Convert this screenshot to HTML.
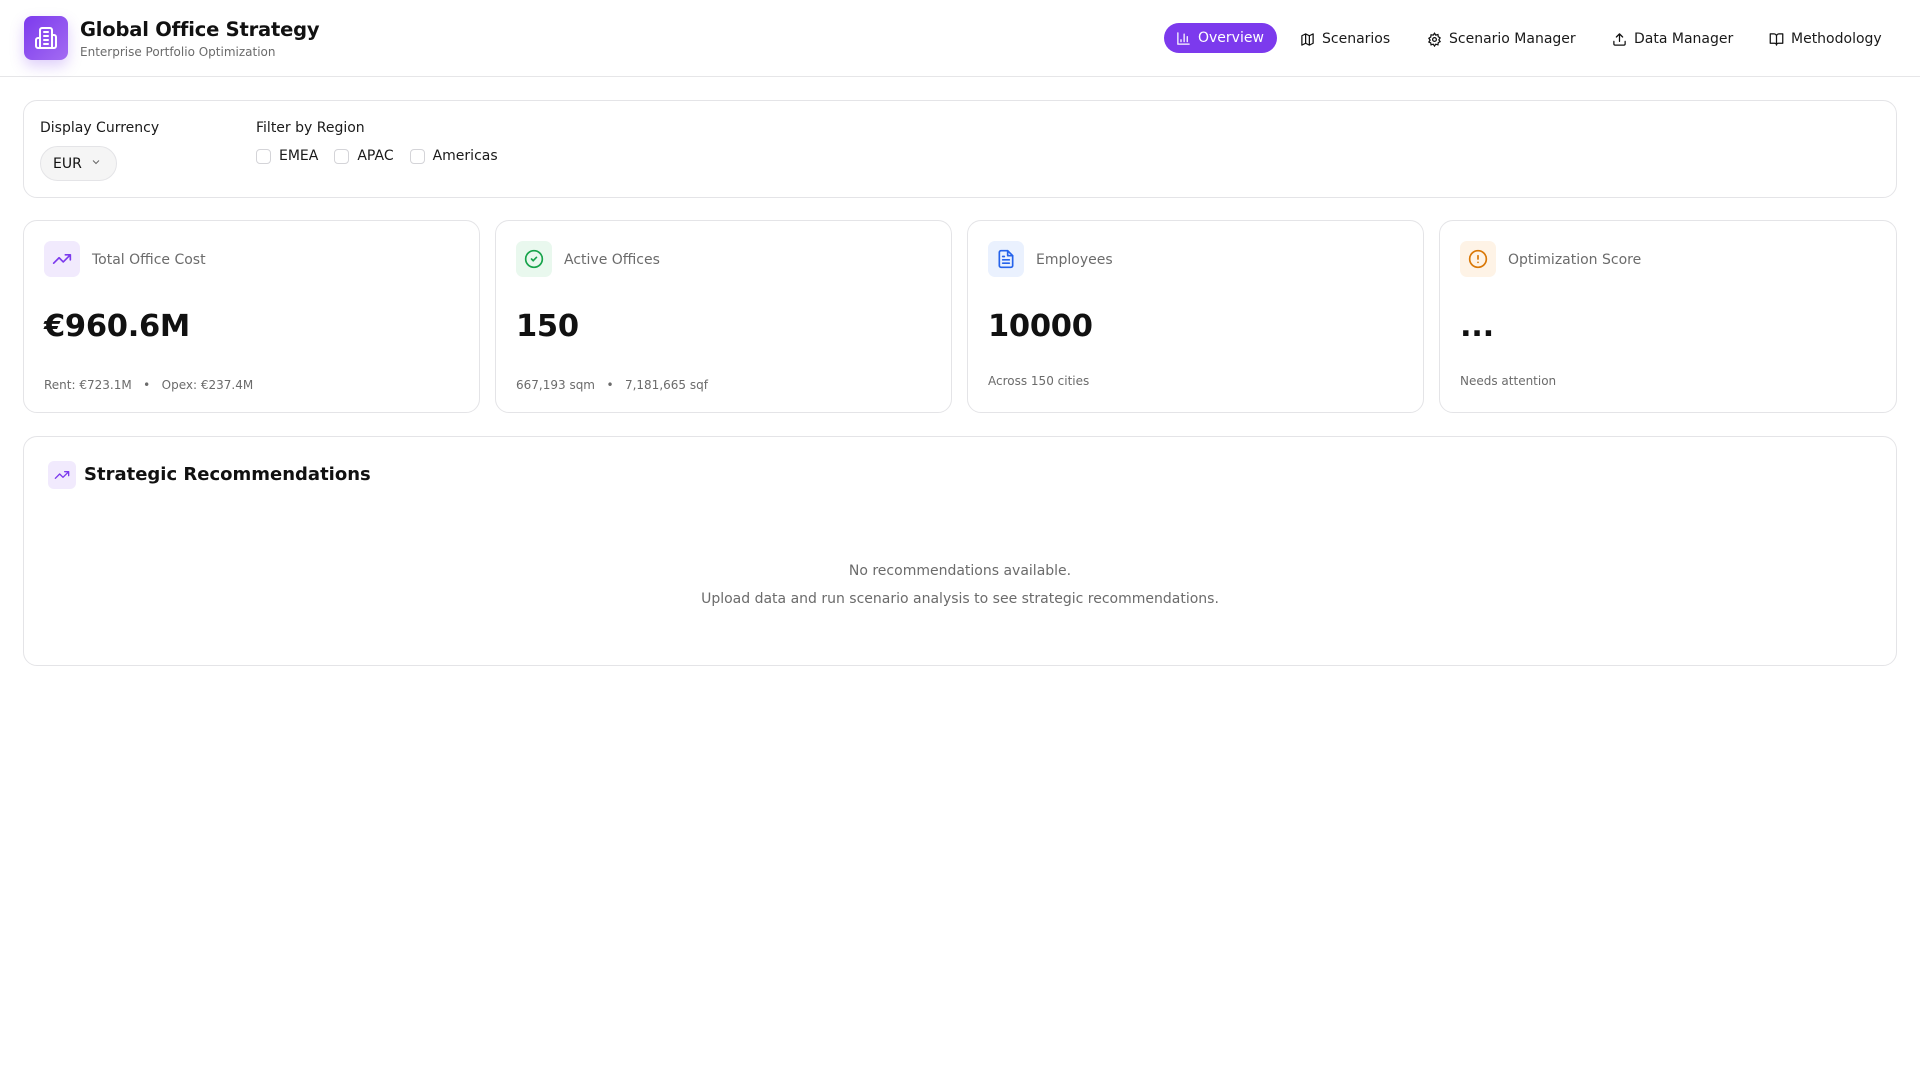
<!DOCTYPE html>
<html><head><meta charset="utf-8"><style>
*{box-sizing:border-box;margin:0;padding:0}
body{width:1920px;height:1080px;background:#fff;font-family:"DejaVu Sans","Liberation Sans",sans-serif;color:#111;position:relative;overflow:hidden}
.abs{position:absolute}
header{position:absolute;left:0;top:0;width:1920px;height:77px;border-bottom:1px solid #e6e6e8}
.logo{left:24px;top:16px;width:44px;height:44px;border-radius:8px;background:linear-gradient(135deg,#7c3aed,#a36bf2);box-shadow:0 6px 14px rgba(124,58,237,.25);display:flex;align-items:center;justify-content:center}
.title{left:80px;top:18px;font-size:19.5px;font-weight:bold;letter-spacing:-0.2px}
.sub{left:80px;top:45px;font-size:12px;color:#6b6b6b}
.nav{position:absolute;top:24px;height:30px;display:flex;align-items:center;font-size:14px;color:#1a1a1a;gap:7px}
.nav svg{width:15px;height:15px}
.pill{background:#7c3aed;color:#fff;border-radius:15px;padding:0 12px;top:23px}
.card{position:absolute;border:1px solid #e4e4e7;border-radius:14px;background:#fff}
.lbl{font-size:14px;color:#1a1a1a}
.chk{display:inline-block;width:15px;height:15px;border:1px solid #d4d4d8;border-radius:4px;vertical-align:middle;margin-right:8px}
.ico{position:absolute;left:20px;top:20px;width:36px;height:36px;border-radius:7px;display:flex;align-items:center;justify-content:center}
.klabel{position:absolute;left:68px;top:31px;font-size:14px;color:#6b6b6b}
.kval{position:absolute;left:20px;top:88px;font-size:30.5px;font-weight:bold;letter-spacing:-0.3px}
.kfoot{position:absolute;left:20px;font-size:12px;color:#6b6b6b}
</style></head><body>
<header>
<div class="abs logo"><svg width="24" height="24" viewBox="0 0 24 24" fill="none" stroke="#fff" stroke-width="2" stroke-linecap="round" stroke-linejoin="round"><path d="M6 22V4a2 2 0 0 1 2-2h8a2 2 0 0 1 2 2v18Z"/><path d="M6 12H4a2 2 0 0 0-2 2v6a2 2 0 0 0 2 2h2"/><path d="M18 9h2a2 2 0 0 1 2 2v9a2 2 0 0 1-2 2h-2"/><path d="M10 6h4M10 10h4M10 14h4M10 18h4"/></svg></div>
<div class="abs title">Global Office Strategy</div>
<div class="abs sub">Enterprise Portfolio Optimization</div>
<div class="nav pill" style="left:1164px;width:113px"><svg viewBox="0 0 24 24" fill="none" stroke="#fff" stroke-width="2" stroke-linecap="round"><path d="M3 3v18h18M18 17V9M13 17V5M8 17v-3"/></svg>Overview</div>
<div class="nav" style="left:1300px"><svg viewBox="0 0 24 24" fill="none" stroke="#111" stroke-width="2" stroke-linejoin="round"><path d="M3 6l6-3 6 3 6-3v15l-6 3-6-3-6 3Z"/><path d="M9 3v15M15 6v15"/></svg>Scenarios</div>
<div class="nav" style="left:1427px"><svg viewBox="0 0 24 24" fill="none" stroke="#111" stroke-width="2"><circle cx="12" cy="12" r="3"/><path d="M12 2l2 3 3.5-1 .5 3.5 3 2-2 3 2 3-3 1.5-.5 3.5-3.5-1-2 3-2-3-3.5 1L6 17.5 3 16l2-3-2-3 3-2L6.5 4.5 10 5Z"/></svg>Scenario Manager</div>
<div class="nav" style="left:1612px"><svg viewBox="0 0 24 24" fill="none" stroke="#111" stroke-width="2" stroke-linecap="round" stroke-linejoin="round"><path d="M21 15v4a2 2 0 0 1-2 2H5a2 2 0 0 1-2-2v-4M17 8l-5-5-5 5M12 3v12"/></svg>Data Manager</div>
<div class="nav" style="left:1769px"><svg viewBox="0 0 24 24" fill="none" stroke="#111" stroke-width="2" stroke-linejoin="round"><path d="M2 3h6a4 4 0 0 1 4 4v14a3 3 0 0 0-3-3H2ZM22 3h-6a4 4 0 0 0-4 4v14a3 3 0 0 1 3-3h7Z"/></svg>Methodology</div>
</header>

<div class="card" style="left:23px;top:100px;width:1874px;height:98px">
<div class="abs lbl" style="left:16px;top:19px">Display Currency</div>
<div class="abs" style="left:16px;top:45px;width:77px;height:35px;border:1px solid #e4e4e7;border-radius:18px;background:#f5f5f5;font-size:14px;padding:9px 0 0 12px">EUR <svg width="12" height="12" viewBox="0 0 24 24" fill="none" stroke="#666" stroke-width="2" style="margin-left:4px"><path d="M6 9l6 6 6-6"/></svg></div>
<div class="abs lbl" style="left:232px;top:19px">Filter by Region</div>
<div class="abs lbl" style="left:232px;top:47px"><span class="chk"></span>EMEA<span class="chk" style="margin-left:16px"></span>APAC<span class="chk" style="margin-left:16px"></span>Americas</div>
</div>

<div class="card" style="left:23px;top:220px;width:457px;height:193px">
<div class="ico" style="background:#f1eafd"><svg width="20" height="20" viewBox="0 0 24 24" fill="none" stroke="#7c3aed" stroke-width="2" stroke-linecap="round" stroke-linejoin="round"><path d="M22 7l-8.5 8.5-5-5L2 17M16 7h6v6"/></svg></div>
<div class="klabel">Total Office Cost</div><div class="kval">€960.6M</div>
<div class="kfoot" style="top:157px">Rent: €723.1M &nbsp;&nbsp;•&nbsp;&nbsp; Opex: €237.4M</div></div>

<div class="card" style="left:495px;top:220px;width:457px;height:193px">
<div class="ico" style="background:#e9f8ee"><svg width="20" height="20" viewBox="0 0 24 24" fill="none" stroke="#16a34a" stroke-width="2" stroke-linecap="round"><circle cx="12" cy="12" r="10"/><path d="M9 12l2 2 4-4"/></svg></div>
<div class="klabel">Active Offices</div><div class="kval">150</div>
<div class="kfoot" style="top:157px">667,193 sqm &nbsp;&nbsp;•&nbsp;&nbsp; 7,181,665 sqf</div></div>

<div class="card" style="left:967px;top:220px;width:457px;height:193px">
<div class="ico" style="background:#eaf1fe"><svg width="20" height="20" viewBox="0 0 24 24" fill="none" stroke="#2563eb" stroke-width="2" stroke-linecap="round" stroke-linejoin="round"><path d="M14 2H6a2 2 0 0 0-2 2v16a2 2 0 0 0 2 2h12a2 2 0 0 0 2-2V8Z"/><path d="M14 2v6h6M16 13H8M16 17H8M10 9H8"/></svg></div>
<div class="klabel">Employees</div><div class="kval">10000</div>
<div class="kfoot" style="top:153px">Across 150 cities</div></div>

<div class="card" style="left:1439px;top:220px;width:458px;height:193px">
<div class="ico" style="background:#fef3e6"><svg width="20" height="20" viewBox="0 0 24 24" fill="none" stroke="#d97706" stroke-width="2" stroke-linecap="round"><circle cx="12" cy="12" r="10"/><path d="M12 8v4M12 16h.01"/></svg></div>
<div class="klabel">Optimization Score</div><div class="kval">...</div>
<div class="kfoot" style="top:153px">Needs attention</div></div>

<div class="card" style="left:23px;top:436px;width:1874px;height:230px">
<div class="abs" style="left:24px;top:24px;width:28px;height:28px;border-radius:6px;background:#f1eafd;display:flex;align-items:center;justify-content:center"><svg width="16" height="16" viewBox="0 0 24 24" fill="none" stroke="#7c3aed" stroke-width="2" stroke-linecap="round" stroke-linejoin="round"><path d="M22 7l-8.5 8.5-5-5L2 17M16 7h6v6"/></svg></div>
<div class="abs" style="left:60px;top:27px;font-size:18px;font-weight:bold">Strategic Recommendations</div>
<div class="abs" style="left:0;width:1872px;top:126px;text-align:center;font-size:14px;color:#6b6b6b">No recommendations available.</div>
<div class="abs" style="left:0;width:1872px;top:154px;text-align:center;font-size:14px;color:#6b6b6b">Upload data and run scenario analysis to see strategic recommendations.</div>
</div>
</body></html>
